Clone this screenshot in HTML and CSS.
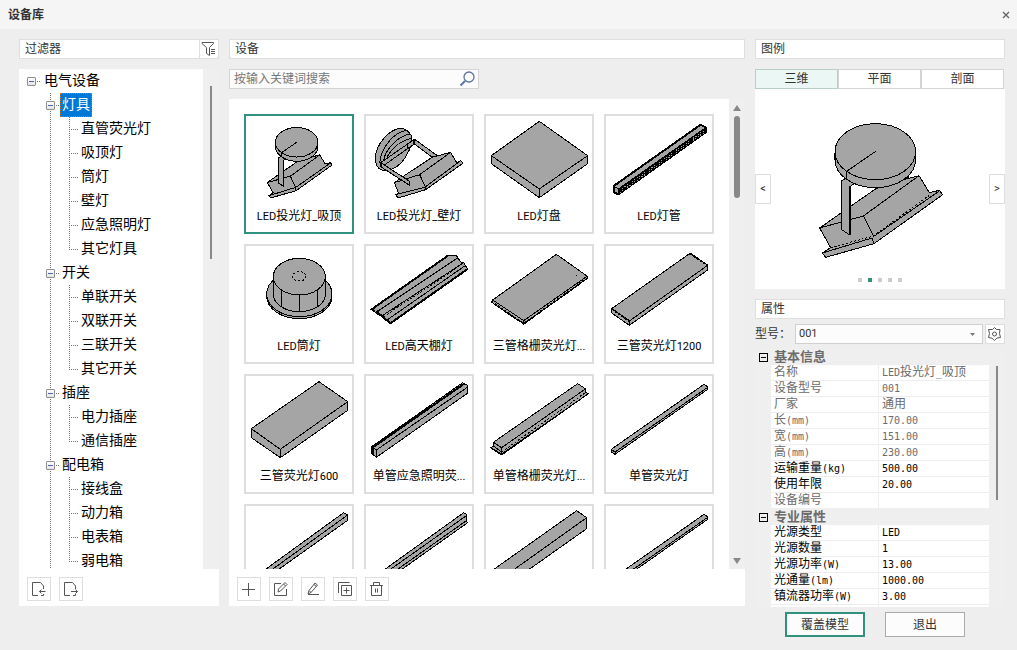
FILE: index.html
```html
<!DOCTYPE html>
<html lang="zh-CN">
<head>
<meta charset="utf-8">
<title>设备库</title>
<link rel="stylesheet" href="styles.css">
</head>
<body>
<div class="window">
  <header class="titlebar">
    <h1>设备库</h1>
    <button class="close" aria-label="关闭"><svg width="8" height="8" viewBox="0 0 8 8"><path d="M1 1L7 7M7 1L1 7" stroke="#666" stroke-width="1.4"/></svg></button>
  </header>
  <main class="columns">

    <section class="column column-tree">
      <div class="heading"><h2>过滤器</h2>
        <button class="filter" aria-label="筛选"><svg width="16" height="16" viewBox="0 0 16 16" fill="none" stroke="#555"><path d="M1 2.500V1.500H12.500V2.500L8.500 6.500V14.500L5.500 12.500V6.500L1 2.500M10 8.500H14M10 10.500H14M10 12.500H14"/></svg></button>
      </div>
      <div class="panel">
        <div class="scroller">
          <div class="tree">
            <div class="node root"><button class="toggle" aria-label="折叠"></button><span>电气设备</span></div>
            <ul class="branches">
              <li><div class="node"><button class="toggle" aria-label="折叠"></button><span class="selected">灯具</span></div>
                <ul class="leaves"><li>直管荧光灯</li><li>吸顶灯</li><li>筒灯</li><li>壁灯</li><li>应急照明灯</li><li>其它灯具</li></ul></li>
              <li><div class="node"><button class="toggle" aria-label="折叠"></button><span>开关</span></div>
                <ul class="leaves"><li>单联开关</li><li>双联开关</li><li>三联开关</li><li>其它开关</li></ul></li>
              <li><div class="node"><button class="toggle" aria-label="折叠"></button><span>插座</span></div>
                <ul class="leaves"><li>电力插座</li><li>通信插座</li></ul></li>
              <li><div class="node"><button class="toggle" aria-label="折叠"></button><span>配电箱</span></div>
                <ul class="leaves"><li>接线盒</li><li>动力箱</li><li>电表箱</li><li>弱电箱</li></ul></li>
            </ul>
          </div>
          <div class="rail rail-tree"><div class="thumb"></div></div>
        </div>
        <div class="toolbar">
          <button aria-label="导入"><svg width="16" height="16" viewBox="0 0 16 16"><path d="M7 14.500H1.500V1.500H9.500L12.500 5V8M12.500 13V14.500H10M8.500 10.500H14.500M10.500 8.500L8.500 10.500L10.500 12.500"/></svg></button>
          <button aria-label="导出"><svg width="16" height="16" viewBox="0 0 16 16"><path d="M7 14.500H1.500V1.500H9.500L12.500 5V8M12.500 13V14.500H10M8 10.500H14.500M12.500 8.500L14.500 10.500L12.500 12.500"/></svg></button>
        </div>
      </div>
    </section>

    <section class="column column-devices">
      <div class="heading"><h2>设备</h2></div>
      <div class="search"><input type="text" placeholder="按输入关键词搜索" aria-label="搜索">
        <svg width="16" height="16" viewBox="0 0 16 16" fill="none" stroke="#5b74a5"><circle cx="10" cy="6" r="5" stroke-width="1.300"/><path d="M6 10L1.500 14.500" stroke-width="2"/></svg></div>
      <div class="panel">
        <div class="scroller">
          <div class="cards">
            <button class="card active"><svg class="art" viewBox="54 168 318 270"><g transform="translate(87 181) scale(.527)"><path d="M59 354L150 290L228 236L325 205L357 197L388 248L418 241L428 254L222 401L77 442L67 429L92 413Z"/><path class="ln" d="M59 354L190 318L357 197M190 318L222 385M67 429L222 381L418 243M222 381V401"/><path d="M125 212L140 203L162 222L149 230V375L125 359Z"/><path d="M105 125V149A121 84 0 0 0 347 149V125Z"/><ellipse cx="226" cy="125" rx="121" ry="84"/><path class="ln" d="M227 124L140 184V208"/></g></svg><span><i>LED</i>投光灯<i>_</i>吸顶</span></button>
            <button class="card"><svg class="art" viewBox="414 168 318 270"><path d="M499 368L532 345L612 292L668 277L686 308L697 302L706 309L593 389L510 414L503 404L512 400Z"/><path class="ln" d="M499 368L575 344L668 277M575 344L592 380M503 404L590 382L697 303M592 380V389"/><path d="M516 205C480 210 445 255 442 290C441 312 448 325 462 330C482 333 505 325 520 308C540 285 552 255 552 235C550 220 535 205 516 205Z"/><path class="ln" d="M536 211C500 215 460 260 455 308M548 222C515 225 472 265 466 304M552 235C535 238 500 250 478 290"/><path d="M458 308L556 240L564 248L468 316Z"/><path class="ln" d="M537 254V266M556 240V254L545 262"/><path d="M560 238L628 287L612 291L558 251Z"/><path d="M458 308L545 364V376L458 320Z"/><path class="heavy" d="M458 308V322"/></svg><span><i>LED</i>投光灯<i>_</i>壁灯</span></button>
            <button class="card"><svg class="art" viewBox="18 168 318 270"><path d="M178 184L323 287V311L178 413L34 311V287Z"/><path class="ln" d="M34 287L178 387L323 287M178 387V413"/></svg><span><i>LED</i>灯盘</span></button>
            <button class="card"><svg class="art" viewBox="378 168 318 270"><path class="heavy" d="M662 194L677 202V217L415 403L401 396V378Z"/><path class="solid" d="M415 387L677 203V217L415 403Z"/><path class="specks" d="M419 391L676 209M419 398L676 215"/><path class="ln" d="M401 378L415 387"/></svg><span><i>LED</i>灯管</span></button>

            <button class="card"><svg class="art" viewBox="33 18 318 270"><ellipse cx="193" cy="168" rx="98" ry="68"/><ellipse cx="193" cy="162" rx="98" ry="68"/><path d="M115 110V163A78 52 0 0 0 271 163V110Z"/><ellipse cx="193" cy="110" rx="78" ry="55"/><path class="ln" d="M140 151V200M193 165V215M247 151V200"/><ellipse class="ln dash" cx="193" cy="109" rx="20" ry="14"/></svg><span><i>LED</i>筒灯</span></button>
            <button class="card"><svg class="art" viewBox="393 18 318 270"><path d="M640 46L665 48L677 66L686 68L698 87L466 250L452 238L440 228L418 215L410 208Z"/><path class="ln" d="M425 216L668 54M440 228L686 68M456 240L692 76"/><path class="ln dash" d="M446 230L660 88"/><path class="heavy" d="M640 46L410 208L420 214M440 228L466 250L698 87"/><path class="heavy" d="M430 210V222L446 230M475 206L480 209M485 200L490 203"/></svg><span><i>LED</i>高天棚灯</span></button>
            <button class="card"><svg class="art" viewBox="18 18 318 270"><path d="M229 43L321 108V116L131 252L34 186L38 180Z"/><path class="ln" d="M38 180L131 242L321 109M131 242V252"/><path class="heavy dash" d="M34 185L131 251L321 115"/><path class="ln" d="M289 106H292"/></svg><span>三管格栅荧光灯<i>...</i></span></button>
            <button class="card"><svg class="art" viewBox="378 18 318 270"><path d="M630 40L683 76V90L448 256L395 219V206Z"/><path class="ln" d="M395 206L448 243L683 76M448 243V256"/><path class="heavy dash" d="M630 41L683 76M395 206L448 243"/></svg><span>三管荧光灯<i>1200</i></span></button>

            <button class="card"><svg class="art" viewBox="33 18 318 270"><path d="M252 35L338 95V121L136 263L49 203V176Z"/><path class="ln" d="M49 176L136 238L338 95M136 238V263"/></svg><span>三管荧光灯<i>600</i></span></button>
            <button class="card"><svg class="art" viewBox="393 18 318 270"><path d="M683 38L697 45V70L424 262L410 250V230Z"/><path class="ln" d="M424 240L697 52M424 240V262M410 230L424 240"/><path class="heavy" d="M414 232L688 41M414 234V252"/></svg><span>单管应急照明荧<i>...</i></span></button>
            <button class="card"><svg class="art" viewBox="18 18 318 270"><path d="M293 41L316 56V66L325 71L65 255L32 234L40 228V217Z"/><path class="ln" d="M40 217L65 233L316 57M65 233V252M40 228L65 246"/><path class="ln dash" d="M65 246L316 68"/><path class="ln" d="M32 233L65 252L325 71"/></svg><span>单管格栅荧光灯<i>...</i></span></button>
            <button class="card"><svg class="art" viewBox="378 18 318 270"><path d="M672 43L683 50V58L405 253L394 246V238Z"/><path class="ln" d="M394 238L405 246L683 52M405 246V253"/></svg><span>单管荧光灯</span></button>

            <button class="card" aria-label="灯具"><svg class="art" viewBox="33 408 318 270"><path d="M326 428L338 434V451L58 650L20 650Z"/><path class="ln" d="M338 435L40 650"/></svg></button>
            <button class="card" aria-label="灯具"><svg class="art" viewBox="393 408 318 270"><path d="M686 428L694 433V452L698 458L430 648L380 648Z"/><path class="ln" d="M694 437L390 652M694 452L414 650"/></svg></button>
            <button class="card" aria-label="灯具"><svg class="art" viewBox="18 408 318 270"><path d="M290 422L320 443V476L74 650H-32Z"/><path class="ln" d="M320 443L30 650"/></svg></button>
            <button class="card" aria-label="灯具"><svg class="art" viewBox="378 408 318 270"><path d="M672 433L683 440V448L405 643L394 636V628Z"/><path class="ln" d="M394 628L405 636L683 442"/></svg></button>
          </div>
          <div class="rail rail-cards">
            <svg width="8" height="6" viewBox="0 0 8 6"><path d="M4 0L8 6H0Z" fill="#888"/></svg>
            <div class="thumb"></div>
            <svg width="8" height="6" viewBox="0 0 8 6"><path d="M4 6L8 0H0Z" fill="#888"/></svg>
          </div>
        </div>
        <div class="toolbar">
          <button aria-label="新增"><svg width="16" height="16" viewBox="0 0 16 16"><path d="M1 8.500H14M7.500 2V15"/></svg></button>
          <button aria-label="编辑"><svg width="16" height="16" viewBox="0 0 16 16"><path d="M8 2.500H1.500V14.500H13.500V8M5 11L5.500 8L12 1.500L14 3.500L7.500 10ZM10.500 3L12.500 5"/></svg></button>
          <button aria-label="重命名"><svg width="16" height="16" viewBox="0 0 16 16"><path d="M3 13L4 9.500L10 2L12.500 4L6 11.500ZM9 3.500L11.500 5.500M4 9.500L6 11.500M3 13.500H14"/></svg></button>
          <button aria-label="复制"><svg width="16" height="16" viewBox="0 0 16 16"><path d="M1.500 12V1.500H12.500M4.500 4.500H14.500V14.500H4.500ZM6.500 9.500H12.500M9.500 6.500V12.500"/></svg></button>
          <button aria-label="删除"><svg width="16" height="16" viewBox="0 0 16 16"><path d="M1 4.500H14M4.500 4.500V1.500H10.500V4.500M2.500 4.500V14.500H12.500V4.500M6.500 7.500V11.500M8.500 7.500V11.500"/></svg></button>
        </div>
      </div>
    </section>

    <section class="column column-detail">
      <div class="heading"><h2>图例</h2></div>
      <div class="tabs" role="tablist">
        <button role="tab" aria-selected="true" class="current">三维</button><button role="tab">平面</button><button role="tab">剖面</button>
      </div>
      <div class="viewer">
        <button class="step" aria-label="上一张">&lt;</button>
        <svg class="art preview" viewBox="0 0 480 474">
          <path d="M59 354L150 290L228 236L325 205L357 197L388 248L418 241L428 254L222 401L77 442L67 429L92 413Z"/>
          <path class="ln" d="M59 354L190 318L357 197M190 318L220 378M67 429L216 384L222 401M220 380L418 243"/>
          <path class="ln dash" d="M92 413L220 378L388 256"/>
          <path d="M125 212L140 203L162 222L149 230V375L125 359Z"/>
          <path class="heavy" d="M149 230V375"/>
          <path d="M105 125V149A121 84 0 0 0 347 149V125Z"/>
          <ellipse cx="226" cy="125" rx="121" ry="84"/>
          <path class="ln" d="M227 124L140 184V208"/>
          <path class="heavy" d="M104 128V150M324 198V208"/>
        </svg>
        <button class="step" aria-label="下一张">&gt;</button>
        <div class="dots"><b></b><b class="on"></b><b></b><b></b><b></b></div>
      </div>
      <div class="heading props-heading"><h2>属性</h2></div>
      <div class="model">
        <label for="model">型号：</label>
        <div class="picker"><select id="model"><option>001</option></select><svg width="5" height="3" viewBox="0 0 5 3"><path d="M0 0H5L2.500 3Z" fill="#777"/></svg></div>
        <button class="gear" aria-label="设置"><svg width="16" height="16" viewBox="0 0 16 16"><path d="M7.500 1.500L9.500 3.500L13 3.500L12.500 7.500L13.500 11.500L10 12L7.500 14.500L5 12.200L1.500 11.500L2.500 7.500L1.500 3.500L5.500 3.500Z"/><circle cx="7.500" cy="8" r="2"/></svg></button>
      </div>
      <div class="props">
        <table>
          <colgroup><col class="c-gutter"><col class="c-name"><col></colgroup>
          <tr class="group"><td><button class="fold" aria-label="折叠"></button></td><th colspan="2">基本信息</th></tr>
          <tr class="ro"><td></td><td>名称</td><td><i>LED</i>投光灯<i>_</i>吸顶</td></tr>
          <tr class="ro"><td></td><td>设备型号</td><td><i>001</i></td></tr>
          <tr class="ro"><td></td><td>厂家</td><td>通用</td></tr>
          <tr class="ro"><td></td><td>长<i>(mm)</i></td><td><i>170.00</i></td></tr>
          <tr class="ro"><td></td><td>宽<i>(mm)</i></td><td><i>151.00</i></td></tr>
          <tr class="ro"><td></td><td>高<i>(mm)</i></td><td><i>230.00</i></td></tr>
          <tr><td></td><td>运输重量<i>(kg)</i></td><td><i>500.00</i></td></tr>
          <tr><td></td><td>使用年限</td><td><i>20.00</i></td></tr>
          <tr class="ro"><td></td><td>设备编号</td><td></td></tr>
          <tr class="group"><td><button class="fold" aria-label="折叠"></button></td><th colspan="2">专业属性</th></tr>
          <tr><td></td><td>光源类型</td><td><i>LED</i></td></tr>
          <tr><td></td><td>光源数量</td><td><i>1</i></td></tr>
          <tr><td></td><td>光源功率<i>(W)</i></td><td><i>13.00</i></td></tr>
          <tr><td></td><td>光通量<i>(lm)</i></td><td><i>1000.00</i></td></tr>
          <tr><td></td><td>镇流器功率<i>(W)</i></td><td><i>3.00</i></td></tr>
          <tr><td></td><td></td><td></td></tr>
        </table>
        <div class="rail rail-props"><div class="thumb"></div></div>
      </div>
      <div class="actions"><button class="primary">覆盖模型</button><button>退出</button></div>
    </section>
  </main>
</div>
</body>
</html>
```

FILE: styles.css
```css
* { box-sizing: border-box; }
body { margin: 0; background: #eee; color: #333; font: 12px/18px "Roboto", "Noto Sans CJK SC", sans-serif; }
button, input, select { font: inherit; color: inherit; margin: 0; padding: 0; border-radius: 0; }
button { background: #fff; border: 1px solid #dedede; }
h1, h2, ul { margin: 0; padding: 0; font-size: inherit; }
ul { list-style: none; }
i { font-style: normal; }
svg { display: block; flex: none; }

.window { height: 100vh; display: flex; flex-direction: column; overflow: hidden; }
.titlebar { flex: none; height: 29px; padding: 0 7px 0 8px; display: flex; align-items: center; justify-content: space-between; background: #f5f5f5; }
.titlebar h1 { font-weight: bold; }
.close { padding: 0; border: 0; background: none; }

.columns { flex: 1; min-height: 0; display: grid; grid-template-columns: 200px minmax(0, 1fr) 250px; gap: 10px; padding: 10px 12px 13px 19px; }
.column { display: flex; flex-direction: column; min-height: 0; min-width: 0; }
.column-tree, .column-devices { padding-bottom: 31px; }
.heading { flex: none; height: 20px; display: flex; justify-content: space-between; padding-left: 5px; background: #fff; border: 1px solid #dedede; }
.heading h2 { font-weight: normal; }
.filter { width: 19px; padding-left: 1px; border-width: 0 0 0 1px; }

.panel { flex: 1; min-height: 0; margin-top: 10px; display: flex; flex-direction: column; background: #fff; }
.scroller { flex: 1; min-height: 0; display: flex; overflow: hidden; }
.rail { flex: none; width: 16px; display: flex; flex-direction: column; align-items: center; background: #efefef; }
.rail .thumb { width: 2px; background: #888; }
.toolbar { flex: none; display: flex; gap: 8px; padding: 8px 8px 5px; }
.toolbar button, .gear { display: grid; place-items: center; }
.toolbar button { width: 24px; height: 24px; }
.toolbar svg, .gear svg { fill: none; stroke: #555; }

.tree { flex: 1; color: #000; font-size: 14px; line-height: 23px; white-space: nowrap; overflow: hidden; }
.node { height: 24px; display: flex; align-items: center; padding-left: 27px; }
.node.root { padding-left: 8px; }
.node::after { content: ""; order: 1; width: 3px; height: 1px; margin: 0 1px; background: repeating-linear-gradient(to right, #777 0 1px, transparent 1px 2px); }
.node span { order: 2; height: 24px; padding: 0 2px; }
.node.root span { padding: 0 3px; }
.toggle { width: 9px; height: 9px; border: 1px solid #919191; border-radius: 1px; background: linear-gradient(#4b63a7, #4b63a7) center / 5px 1px no-repeat, linear-gradient(#fff, #e4e4e4); }
.node .selected { padding: 0 1px; line-height: 21px; color: #fff; background: #0078d7; border: 1px dotted #d96d10; }
.branches { background: repeating-linear-gradient(#777 0 1px, transparent 1px 2px) 31px 0 / 1px 100% no-repeat; }
.leaves { background: repeating-linear-gradient(#777 0 1px, transparent 1px 2px) 50px 0 / 1px calc(100% - 12px) no-repeat; }
.leaves li { height: 24px; padding-left: 62px; background: repeating-linear-gradient(to right, #777 0 1px, transparent 1px 2px) 50px 12px / 9px 1px no-repeat; }
.rail-tree { padding-top: 17px; }
.rail-tree .thumb { height: 173px; }

.search { flex: none; width: 250px; height: 20px; margin-top: 10px; padding: 0 3px 0 4px; display: flex; align-items: center; background: #fcfcfc; border: 1px solid #d4d4d4; }
.search input { flex: 1; min-width: 0; border: 0; outline: 0; background: none; }
.search input::placeholder { color: #777; opacity: 1; }
.cards { flex: 1; display: grid; grid-template-columns: repeat(auto-fill, 110px); grid-auto-rows: 120px; gap: 10px; padding: 15px; overflow: hidden; }
.card { display: flex; flex-direction: column; align-items: center; border: 2px solid #dedede; color: #000; line-height: 20px; white-space: nowrap; overflow: hidden; }
.card.active { border-color: #31917f; }
.card i { font-size: 11px; }
.card .art { width: 106px; height: 90px; }
.rail-cards { padding: 6px 0 5px; }
.rail-cards .thumb { width: 6px; height: 82px; margin: 5px 0 auto; border-radius: 3px; }

.art path, .art ellipse { fill: #a5a5a5; stroke: #000; stroke-width: 1px; vector-effect: non-scaling-stroke; shape-rendering: crispEdges; }
.art path.ln, .art ellipse.ln, .art path.heavy, .art path.specks { fill: none; }
.art path.heavy { stroke-width: 2px; }
.art path.heavy:first-child { fill: #a5a5a5; }
.art path.solid { fill: #000; }
.art path.specks { stroke: #a5a5a5; stroke-dasharray: 1 2; }
.art .dash { stroke-dasharray: 2 2; }

.tabs { flex: none; height: 20px; margin: 10px 1px 0 0; display: grid; grid-template-columns: repeat(3, 1fr); }
.tabs button { border-color: #d4d4d4; }
.tabs .current { background: #ebf7f4; border-color: #b8cfc9; }
.viewer { flex: none; height: 200px; position: relative; display: flex; align-items: center; justify-content: space-between; background: #fff; }
.preview { width: 160px; height: 158px; }
.step { width: 16px; height: 30px; font-size: 11px; }
.dots { position: absolute; left: 0; right: 0; bottom: 7px; display: flex; justify-content: center; gap: 6px; }
.dots b { width: 4px; height: 4px; background: #ccc; }
.dots .on { background: #31917f; }

.props-heading { margin-top: 10px; }
.model { flex: none; height: 20px; margin-top: 5px; display: flex; gap: 2px; align-items: center; }
.model label { width: 38px; white-space: nowrap; }
.picker { flex: 1; height: 20px; display: grid; align-items: center; }
.picker select { grid-area: 1 / 1; width: 100%; height: 20px; padding-left: 3px; font-size: 11px; appearance: none; background: #fcfcfc; border: 1px solid #d0d0d0; }
.picker svg { grid-area: 1 / 1; justify-self: end; margin-right: 8px; pointer-events: none; }
.gear { width: 20px; height: 20px; }

.props { flex: 1; min-height: 0; margin-top: 5px; display: flex; overflow: hidden; background: #efefef; }
.props table { flex: 1; align-self: flex-start; table-layout: fixed; border-collapse: separate; border-spacing: 0; width: 100%; color: #000; line-height: 15px; }
.c-gutter { width: 16px; }
.c-name { width: 107px; }
.props td, .props th { height: 16px; padding: 0 4px 0 3px; border-bottom: 1px solid #eee; text-align: left; white-space: nowrap; overflow: hidden; }
.props td:first-child { padding: 0; border: 0; text-align: center; }
.props td + td { background: #fff; }
.props td + td + td { border-left: 1px solid #eee; }
.props i { font: 10px/15px "DejaVu Sans Mono", monospace; }
.props .ro { color: #6b6b6b; }
.props th { color: #6b6b6b; font-size: 13px; font-weight: bold; }
.fold { width: 9px; height: 9px; display: block; margin: auto; border: 1px solid #000; background: linear-gradient(#000, #000) center / 5px 1px no-repeat; }
.rail-props { padding-top: 17px; }
.rail-props .thumb { height: 134px; }

.actions { flex: none; display: flex; justify-content: flex-end; gap: 20px; padding: 5px 40px 0 0; }
.actions button { width: 80px; height: 25px; background: #fcfcfc; border-color: #aaa; }
.actions .primary { border: 2px solid #31917f; }
```
